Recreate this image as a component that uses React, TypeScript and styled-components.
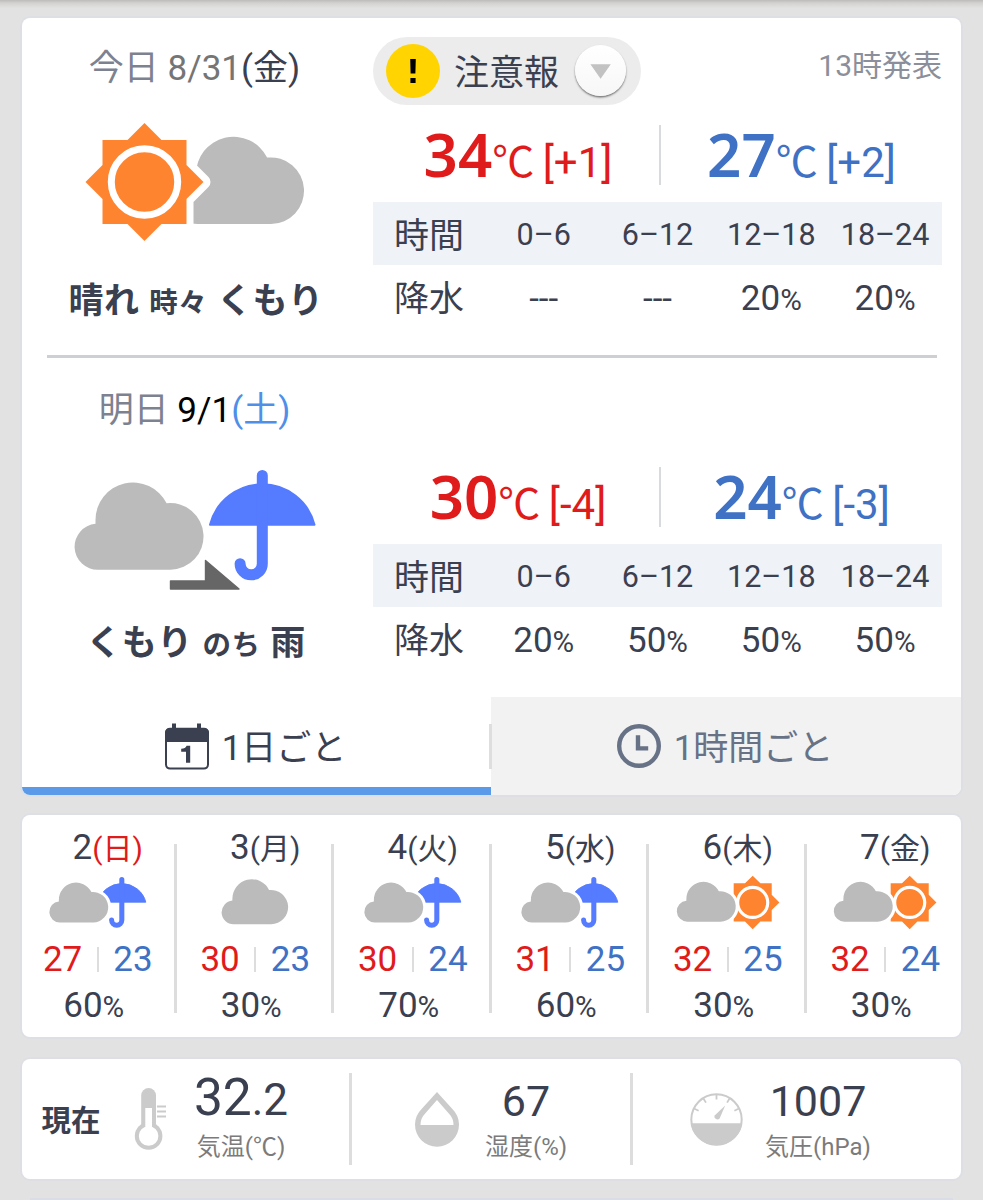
import React from 'react';
import styled, { createGlobalStyle } from 'styled-components';

const color = {
  ink: '#3a4050',
  red: '#e01b1b',
  blue: '#3f71c4',
  sky: '#4f8fe8',
  muted: '#7d8291',
  soft: '#8b8f9b',
  line: '#d9dade',
  cloud: '#bbbbbb',
  sun: '#ff8430',
  rain: '#557bff',
  meter: '#cbcbcb',
};

const GlobalStyle = createGlobalStyle`
  *, *::before, *::after { box-sizing: border-box; }
  html, body { margin: 0; background: #e2e2e2; }
  body {
    font-family: Roboto, "Noto Sans CJK JP", sans-serif;
    color: ${color.ink};
    height: 1200px;
    overflow: hidden;
  }
  svg { display: block; overflow: visible; }
`;

const Page = styled.main`
  display: flex;
  flex-direction: column;
  width: 983px;
  height: 1200px;
  overflow: hidden;
  padding: 0 22px;
  background: linear-gradient(#bdbcba 0, #d2d1d0 3px, #e2e2e2 8px);
`;

const Card = styled.section<{ $h: number; $gap: number }>`
  flex: none;
  width: 939px;
  height: ${(p) => p.$h}px;
  margin-top: ${(p) => p.$gap}px;
  background: #fff;
  border-radius: 8px;
  box-shadow: 0 0 0 2px #dddfe5;
  overflow: hidden;
`;

/* Text */
const Tint = styled.span<{ $c?: string; $size?: number }>`
  line-height: 0;
  color: ${(p) => p.$c ?? 'inherit'};
  font-size: ${(p) => (p.$size ? `${p.$size}px` : 'inherit')};
`;

/* Today / tomorrow */
const Day = styled.article`
  display: flex;
  height: 337px;
`;

const Summary = styled.div`
  width: 345px;
  margin-right: 6px;
  padding-top: 31px;
  display: flex;
  flex-direction: column;
  align-items: center;
`;

const DateLine = styled.div`
  height: 40px;
  line-height: 40px;
  font-size: 35px;
  white-space: pre;
`;

const Picture = styled.div`
  margin-top: 33px;
  height: 120px;
`;

const Description = styled.div`
  margin-top: 39px;
  height: 40px;
  padding-left: 3px;
  line-height: 41px;
  font-size: 35px;
  font-weight: 700;
  letter-spacing: 0.5px;
  word-spacing: 0.5px;
  white-space: pre;
`;

const Details = styled.div`
  width: 569px;
`;

const DetailsTop = styled.div`
  display: flex;
  justify-content: space-between;
  align-items: flex-start;
  height: 107px;
`;

const Alert = styled.button`
  display: flex;
  align-items: center;
  width: 268px;
  height: 68px;
  margin: 19px 0 0;
  padding: 0 15px 0 13px;
  border: 0;
  border-radius: 34px;
  background: #ececec;
  color: ${color.ink};
  font: 400 35px/40px Roboto, 'Noto Sans CJK JP', sans-serif;
`;

const AlertMark = styled.span`
  width: 54px;
  height: 54px;
  margin-right: 14px;
  border-radius: 50%;
  background: #ffd400;
`;

const AlertLabel = styled.span`
  padding-top: 6px;
`;

const AlertKnob = styled.span`
  width: 51px;
  height: 51px;
  margin: -1px 0 0 auto;
  border-radius: 50%;
  background: linear-gradient(#fff, #f7f7f7);
  box-shadow: 0 1.5px 2px rgba(0, 0, 0, 0.5);
`;

const Issued = styled.div`
  margin-top: 28px;
  line-height: 40px;
  font-size: 30px;
  color: ${color.soft};
`;

const Temps = styled.div`
  display: grid;
  grid-template-columns: 286px 2px 1fr;
  grid-template-rows: 60px;
  margin-bottom: 17px;
`;

const Temp = styled.div<{ $c: string; $shift: number }>`
  line-height: 76px;
  font-size: 42px;
  word-spacing: -2px;
  text-align: center;
  white-space: pre;
  color: ${(p) => p.$c};
  padding-left: ${(p) => p.$shift}px;
`;

const Degrees = styled.b`
  font-family: 'Noto Sans', sans-serif;
  font-weight: 600;
  font-size: 60px;
  line-height: 0;
`;

const TempRule = styled.i`
  background: ${color.line};
`;

const HourRow = styled.div<{ $head?: boolean }>`
  display: grid;
  grid-template-columns: repeat(5, 1fr);
  height: ${(p) => (p.$head ? 62.5 : 67)}px;
  padding-top: ${(p) => (p.$head ? 2 : 0)}px;
  line-height: ${(p) => (p.$head ? 61 : 67)}px;
  font-size: ${(p) => (p.$head ? 30.5 : 35)}px;
  text-align: center;
  background: ${(p) => (p.$head ? '#eff2f6' : 'transparent')};
`;

const RowLabel = styled.div<{ $drop: number }>`
  font-size: 35px;
  padding: ${(p) => p.$drop}px 2px 0 0;
`;

const Cell = styled.div`
  white-space: nowrap;
`;

const Divider = styled.hr`
  height: 3px;
  margin: 0 24px 2px 25px;
  border: 0;
  background: #cdcfd3;
`;

/* Tabs */
const Tabs = styled.nav`
  display: grid;
  grid-template-columns: 469px 1fr;
  height: 98px;
`;

const Tab = styled.button<{ $active?: boolean }>`
  position: relative;
  display: flex;
  align-items: center;
  justify-content: center;
  gap: 13px;
  border: 0;
  padding: 0 2px 0 0;
  background: ${(p) => (p.$active ? '#fff' : '#f2f2f2')};
  box-shadow: ${(p) => (p.$active ? 'inset 0 -8px 0 #5a9ae8' : 'none')};
  color: ${(p) => (p.$active ? color.ink : '#677287')};
  font: 400 35px/40px Roboto, 'Noto Sans CJK JP', sans-serif;
`;

const TabLabel = styled.span`
  padding-top: 5px;
`;

const TabRule = styled.i`
  position: absolute;
  left: -2px;
  top: 27px;
  width: 3px;
  height: 45px;
  background: #dedede;
`;

/* Six-day strip */
const Week = styled.div`
  display: flex;
  height: 100%;
  margin-left: -3px;
`;

const WeekDay = styled.div`
  display: flex;
  flex: 0 0 157.5px;
`;

const WeekBody = styled.div`
  flex: 1;
  display: flex;
  flex-direction: column;
  align-items: center;
  padding-top: 12px;
`;

const WeekRule = styled.i<{ $hidden: boolean }>`
  width: 3px;
  margin: 29px 0 24px;
  background: ${(p) => (p.$hidden ? 'transparent' : '#dddddd')};
`;

const WeekDate = styled.div`
  padding-left: 23px;
  height: 40px;
  line-height: 41px;
  font-size: 35px;
`;

const WeekIcon = styled.div`
  margin: 9px 0 10px;
  padding-left: 3px;
`;

const WeekTemps = styled.div`
  display: flex;
  align-items: center;
  gap: 14.5px;
  height: 40px;
  padding-left: 3px;
  line-height: 40px;
  font-size: 35px;
`;

const SmallRule = styled.i`
  width: 2px;
  height: 25px;
  margin-top: -2px;
  background: #dddddd;
`;

const WeekRain = styled.div`
  margin-top: 6px;
  padding-right: 5px;
  line-height: 40px;
  font-size: 35px;
`;

/* Current conditions */
const Now = styled.div`
  display: grid;
  grid-template-columns: 98px 232px 281px 1fr;
  align-items: center;
  height: 120px;
`;

const NowTitle = styled.div`
  padding: 4px 0 0 19.5px;
  line-height: 40px;
  font-size: 29.5px;
  font-weight: 700;
`;

const Reading = styled.div<{ $left: number; $gap: number; $ruled?: boolean }>`
  display: flex;
  align-items: center;
  gap: ${(p) => p.$gap}px;
  height: 92px;
  padding-left: ${(p) => p.$left}px;
  border-right: ${(p) => (p.$ruled ? '3px solid #dddddd' : '0')};
`;

const ReadingText = styled.div`
  width: 120px;
  height: 92px;
  text-align: center;
`;

const ReadingValue = styled.div<{ $lift?: boolean }>`
  height: 56px;
  line-height: ${(p) => (p.$lift ? 54 : 56)}px;
  font-size: ${(p) => (p.$lift ? 44 : 43)}px;
  white-space: nowrap;
`;

const ReadingLabel = styled.div`
  margin-top: 4px;
  line-height: 28px;
  font-size: 24px;
  color: #7b7b7b;
  white-space: nowrap;
`;

const NextCard = styled.section`
  flex: none;
  height: 20px;
  margin: 19px 8px 0;
  background: #dadce6;
`;

/* Drawings */
const CLOUD =
  'M23 87A23 23 0 0 1 20.5 41.1V37.5A37.5 37.5 0 0 1 91.6 20.6A33.3 33.3 0 1 1 95.6 87Z';

type Placed = { x: number; y: number; s?: number; halo?: number };

const Cloud = ({ x, y, s = 1, halo = 0 }: Placed) => (
  <g transform={`translate(${x} ${y}) scale(${s})`}>
    {halo > 0 && <path d={CLOUD} fill="#fff" stroke="#fff" strokeWidth={halo * 2} />}
    <path d={CLOUD} fill={color.cloud} />
  </g>
);

const STAR = 'M-42-42H-17L0-59L17-42H42V-17L59 0L42 17V42H17L0 59L-17 42H-42V17L-59 0L-42-17Z';

const Sun = ({ x, y, s = 1, halo = 0 }: Placed) => (
  <g transform={`translate(${x} ${y}) scale(${s})`}>
    {halo > 0 && (
      <path d={STAR} fill="#fff" stroke="#fff" strokeWidth={halo * 2} strokeLinejoin="round" />
    )}
    <path d={STAR} fill={color.sun} />
    <circle r="33.2" fill="none" stroke="#fff" strokeWidth="7" />
  </g>
);

const Umbrella = ({ x, y, s = 1 }: Placed) => (
  <g transform={`translate(${x} ${y}) scale(${s})`}>
    <path
      d="M1 54.7A54 54 0 0 1 105.5 54.7Z"
      fill={color.rain}
      stroke={color.rain}
      strokeWidth="2"
      strokeLinejoin="round"
    />
    <path
      d="M53.3 5.5V93.7A11.1 11.1 0 0 1 31.1 93.7"
      fill="none"
      stroke={color.rain}
      strokeWidth="11"
      strokeLinecap="round"
    />
  </g>
);

const SunThenCloud = () => (
  <svg width="220" height="120">
    <Cloud x={90.5} y={15} />
    <Sun x={59.5} y={60} halo={7} />
  </svg>
);

const CloudThenRain = () => (
  <svg width="240" height="120">
    <Cloud x={0} y={18.7} />
    <Umbrella x={134} y={6} />
    <path
      d="M95.5 117V125H164L130.5 96.5V117Z"
      fill="#666"
      stroke="#666"
      strokeWidth="1.4"
      strokeLinejoin="round"
    />
  </svg>
);

type Sky = 'rain' | 'cloud' | 'sun';

const SmallSky = ({ sky }: { sky: Sky }) => (
  <svg width="100" height="54">
    {sky === 'rain' && <Umbrella x={49.3} y={1} s={0.46} />}
    {sky === 'sun' && <Sun x={74.7} y={26.4} s={0.453} />}
    {sky === 'cloud' ? (
      <Cloud x={16.8} y={3.4} s={0.516} />
    ) : (
      <Cloud x={sky === 'sun' ? -1 : 1.5} y={sky === 'sun' ? 5.9 : 6.7} s={0.457} halo={6.5} />
    )}
  </svg>
);

const CalendarIcon = () => (
  <svg width="44" height="47" viewBox="0 0 44 47">
    <rect x="1" y="6" width="42" height="39.6" rx="4" fill="#fff" stroke={color.ink} strokeWidth="2" />
    <path d="M0 19V9.5A5 5 0 0 1 5 4.7H7V0.5H11V4.7H32V0.5H36V4.7H39A5 5 0 0 1 44 9.5V19Z" fill={color.ink} />
    <path d="M21.6 22.8H25.2V39.8H21V28.8H16.2V25.8Q20.6 25.8 21.6 22.8Z" fill={color.ink} />
  </svg>
);

const ClockIcon = () => (
  <svg width="44" height="44" viewBox="0 0 44 44" fill="none" stroke="#677287">
    <circle cx="22" cy="22" r="19.8" strokeWidth="4.4" />
    <path d="M21 11.3V24.4H31.2" strokeWidth="4.4" />
  </svg>
);

const ExclamationIcon = () => (
  <svg width="54" height="54">
    <path d="M24.2 15H29.8L29.4 29.5H24.6ZM24.4 34H29.6V39H24.4Z" fill="#000" />
  </svg>
);

const DownIcon = () => (
  <svg width="51" height="51">
    <path d="M15.4 19.3H35.8L25.6 33.8Z" fill="#c2c2c2" />
  </svg>
);

const ThermometerIcon = () => (
  <svg width="31" height="62" fill={color.meter}>
    <rect x="6.2" y="0" width="14.8" height="44" rx="7.4" />
    <circle cx="13.6" cy="48" r="13.8" />
    <circle cx="13.6" cy="48" r="9.8" fill="#fff" />
    <rect x="10.3" y="20" width="6.7" height="24" fill="#fff" />
    <path d="M22 17.5H31V19.5H22ZM22 22.5H31V24.5H22ZM22 27.5H31V29.5H22Z" />
  </svg>
);

const DropIcon = () => (
  <svg width="44" height="55">
    <path d="M22 0L6.6 17A22 22 0 1 0 37.4 17Z" fill={color.meter} />
    <path d="M5.5 33A16.5 16.5 0 0 1 10.4 21.2L22 8L33.6 21.2A16.5 16.5 0 0 1 38.5 33Z" fill="#fff" />
  </svg>
);

const GaugeIcon = () => (
  <svg width="53" height="53" viewBox="0 0 53 53">
    <circle cx="26.5" cy="26.5" r="25.2" fill="#fff" stroke={color.meter} strokeWidth="2" />
    <path d="M0.8 30.2A26 26 0 0 0 52.2 30.2Z" fill={color.meter} />
    <g stroke={color.meter} strokeWidth="1.8">
      {[-64, -32, 0, 32, 64].map((a) => (
        <path key={a} d="M26.5 1.5V6.6" transform={`rotate(${a} 26.5 26.5)`} />
      ))}
    </g>
    <path d="M35.2 12.6L29.6 25.4A3 3 0 0 1 24.4 22.8Z" fill={color.meter} />
  </svg>
);

/* Composed parts */
const Percent = ({ value }: { value: string }) => (
  <>
    {value}
    <Tint $size={29.5}>%</Tint>
  </>
);

const HourTable = ({ rain }: { rain: (string | null)[] }) => (
  <>
    <HourRow $head>
      <RowLabel $drop={1.5}>時間</RowLabel>
      {['0–6', '6–12', '12–18', '18–24'].map((h) => (
        <Cell key={h}>{h}</Cell>
      ))}
    </HourRow>
    <HourRow>
      <RowLabel $drop={1}>降水</RowLabel>
      {rain.map((r, i) => (
        <Cell key={i}>{r ? <Percent value={r} /> : '---'}</Cell>
      ))}
    </HourRow>
  </>
);

const TempPair = ({ hi, hiDiff, lo, loDiff }: Record<'hi' | 'hiDiff' | 'lo' | 'loDiff', string>) => (
  <Temps>
    <Temp $c={color.red} $shift={4}>
      <Degrees>{hi}</Degrees>℃ [{hiDiff}]
    </Temp>
    <TempRule />
    <Temp $c={color.blue} $shift={0}>
      <Degrees>{lo}</Degrees>℃ [{loDiff}]
    </Temp>
  </Temps>
);

const week: { d: string; w: string; sky: Sky; hi: string; lo: string; rain: string }[] = [
  { d: '2', w: '日', sky: 'rain', hi: '27', lo: '23', rain: '60' },
  { d: '3', w: '月', sky: 'cloud', hi: '30', lo: '23', rain: '30' },
  { d: '4', w: '火', sky: 'rain', hi: '30', lo: '24', rain: '70' },
  { d: '5', w: '水', sky: 'rain', hi: '31', lo: '25', rain: '60' },
  { d: '6', w: '木', sky: 'sun', hi: '32', lo: '25', rain: '30' },
  { d: '7', w: '金', sky: 'sun', hi: '32', lo: '24', rain: '30' },
];

export default function App() {
  return (
    <>
      <GlobalStyle />
      <Page>
        <Card $h={777} $gap={18}>
          <Day>
            <Summary>
              <DateLine>
                <Tint $c={color.muted}>今日 </Tint>
                <Tint $c="#757575">8/31</Tint>(金)
              </DateLine>
              <Picture>
                <SunThenCloud />
              </Picture>
              <Description>
                晴れ <Tint $size={28.5}>時々</Tint> くもり
              </Description>
            </Summary>
            <Details>
              <DetailsTop>
                <Alert>
                  <AlertMark>
                    <ExclamationIcon />
                  </AlertMark>
                  <AlertLabel>注意報</AlertLabel>
                  <AlertKnob>
                    <DownIcon />
                  </AlertKnob>
                </Alert>
                <Issued>13時発表</Issued>
              </DetailsTop>
              <TempPair hi="34" hiDiff="+1" lo="27" loDiff="+2" />
              <HourTable rain={[null, null, '20', '20']} />
            </Details>
          </Day>
          <Divider />
          <Day>
            <Summary>
              <DateLine>
                <Tint $c={color.muted}>明日 </Tint>
                <Tint $c="#000">9/1</Tint>
                <Tint $c={color.sky}>(土)</Tint>
              </DateLine>
              <Picture>
                <CloudThenRain />
              </Picture>
              <Description>
                くもり <Tint $size={28.5}>のち</Tint> 雨
              </Description>
            </Summary>
            <Details>
              <DetailsTop />
              <TempPair hi="30" hiDiff="-4" lo="24" loDiff="-3" />
              <HourTable rain={['20', '50', '50', '50']} />
            </Details>
          </Day>
          <Tabs>
            <Tab $active>
              <CalendarIcon />
              <TabLabel>1日ごと</TabLabel>
            </Tab>
            <Tab>
              <TabRule />
              <ClockIcon />
              <TabLabel>1時間ごと</TabLabel>
            </Tab>
          </Tabs>
        </Card>

        <Card $h={222} $gap={20}>
          <Week>
            {week.map((day, i) => (
              <WeekDay key={day.d}>
                <WeekBody>
                  <WeekDate>
                    {day.d}
                    <Tint $c={i === 0 ? color.red : color.ink} $size={30}>
                      ({day.w})
                    </Tint>
                  </WeekDate>
                  <WeekIcon>
                    <SmallSky sky={day.sky} />
                  </WeekIcon>
                  <WeekTemps>
                    <Tint $c={color.red}>{day.hi}</Tint>
                    <SmallRule />
                    <Tint $c={color.blue}>{day.lo}</Tint>
                  </WeekTemps>
                  <WeekRain>
                    <Percent value={day.rain} />
                  </WeekRain>
                </WeekBody>
                <WeekRule $hidden={i === week.length - 1} />
              </WeekDay>
            ))}
          </Week>
        </Card>

        <Card $h={120} $gap={22}>
          <Now>
            <NowTitle>現在</NowTitle>
            <Reading $left={15} $gap={15} $ruled>
              <ThermometerIcon />
              <ReadingText>
                <ReadingValue $lift>
                  <Tint $size={51.5}>32</Tint>.2
                </ReadingValue>
                <ReadingLabel>気温(℃)</ReadingLabel>
              </ReadingText>
            </Reading>
            <Reading $left={63} $gap={7} $ruled>
              <DropIcon />
              <ReadingText>
                <ReadingValue>67</ReadingValue>
                <ReadingLabel>湿度(%)</ReadingLabel>
              </ReadingText>
            </Reading>
            <Reading $left={57} $gap={15}>
              <GaugeIcon />
              <ReadingText>
                <ReadingValue>1007</ReadingValue>
                <ReadingLabel>気圧(hPa)</ReadingLabel>
              </ReadingText>
            </Reading>
          </Now>
        </Card>
        <NextCard />
      </Page>
    </>
  );
}
